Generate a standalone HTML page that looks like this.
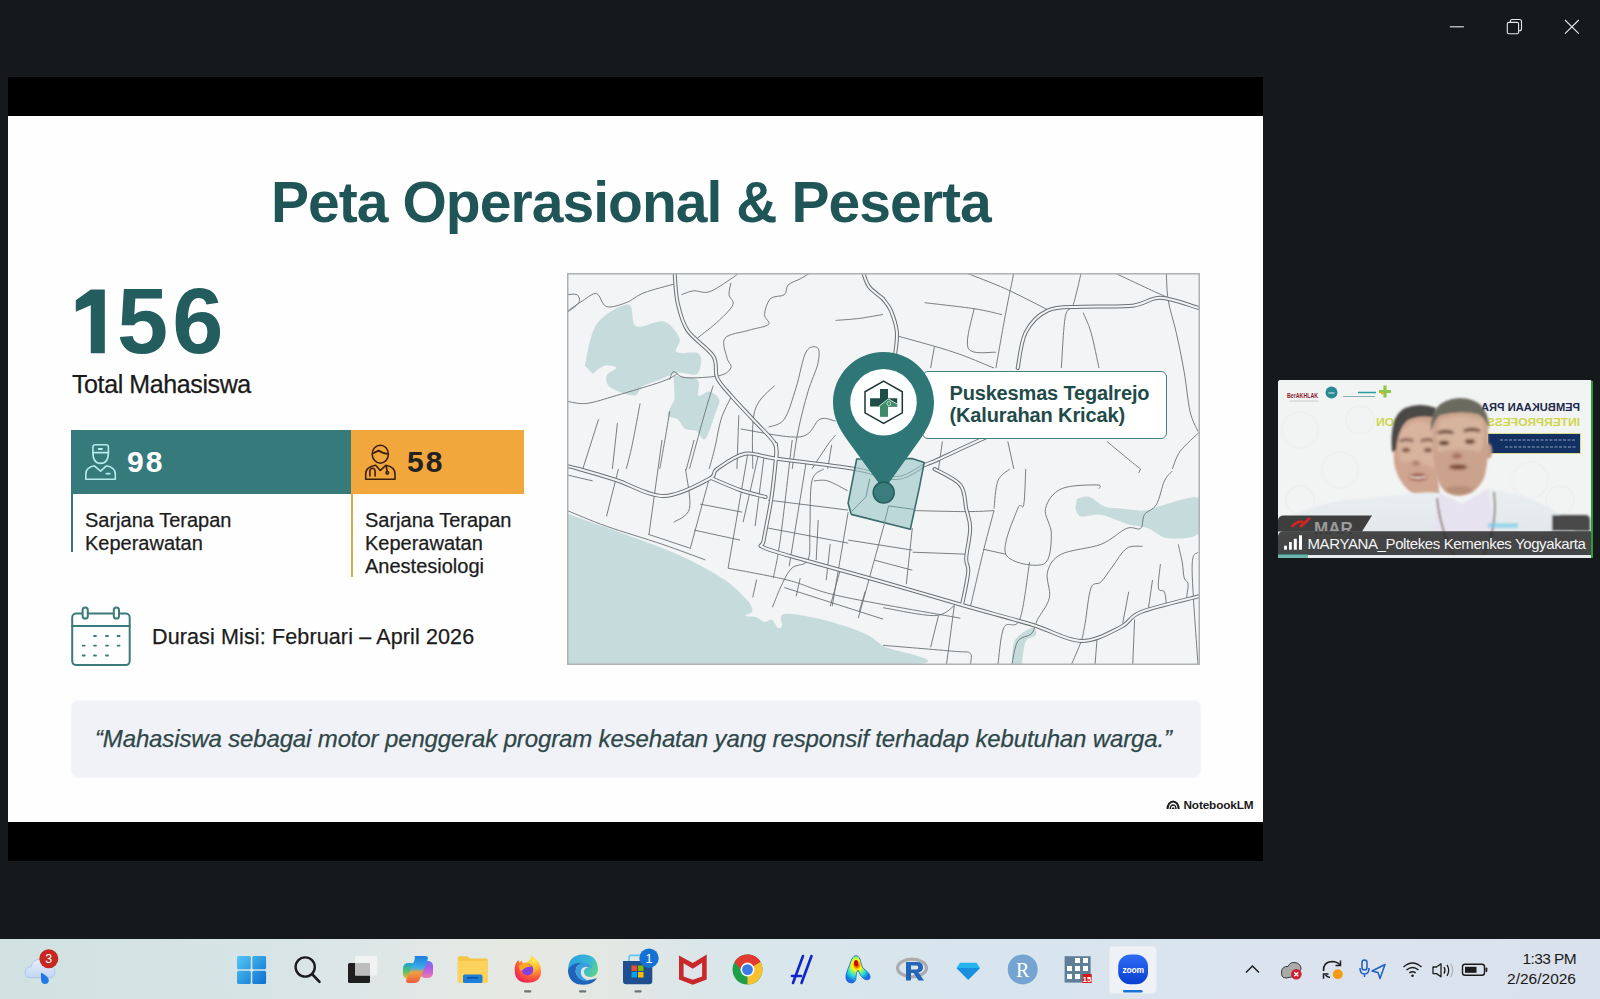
<!DOCTYPE html>
<html><head><meta charset="utf-8">
<style>
html,body{margin:0;padding:0;width:1600px;height:999px;overflow:hidden;background:#16191c;font-family:"Liberation Sans",sans-serif;}
.a{position:absolute;white-space:nowrap;}
#band1{left:8px;top:77px;width:1255px;height:39px;background:#000;}
#slide{left:8px;top:116px;width:1255px;height:706px;background:#fefefe;}
#band2{left:8px;top:822px;width:1255px;height:39px;background:#000;}
#taskbar{left:0;top:939px;width:1600px;height:60px;background:linear-gradient(90deg,#d1e1e2 0%,#d6e4e5 15%,#dfe7e6 25%,#e6e8e2 33%,#e3e7e3 38%,#d9e6ea 45%,#d8e5ee 60%,#dbe3ee 85%,#d9e1ec 100%);}
.t{position:absolute;white-space:nowrap;line-height:1;}
.sw{-webkit-text-stroke:0.25px currentColor;}
</style></head><body>
<svg class="a" style="left:1440px;top:10px" width="150" height="36" viewBox="1440 10 150 36" fill="none" stroke="#e8e8e8" stroke-width="1.1">
<path d="M1449.8 26.8 H1463.9"/>
<rect x="1507.3" y="22.4" width="11.3" height="11.3" rx="1.5"/>
<path d="M1510.3 22.4 V21.5 Q1510.3 19.5 1512.3 19.5 H1519.5 Q1521.5 19.5 1521.5 21.5 V28.7 Q1521.5 30.7 1519.5 30.7 H1518.6"/>
<path d="M1565 20 L1578.8 33.7 M1578.8 20 L1565 33.7"/>
</svg>
<div class="a" id="band1"></div>
<div class="a" id="slide"></div>
<div class="a" id="band2"></div>
<div class="a" id="taskbar"></div>

<!-- title -->
<div class="t" id="title" style="left:271px;top:173.5px;font-size:57px;font-weight:bold;color:#1f5557;letter-spacing:-0.95px;">Peta Operasional &amp; Peserta</div>
<svg class="a" style="left:70px;top:285px" width="40" height="72" viewBox="70 285 40 72"><path d="M90.8 289.5 H104.8 V353.3 H90.8 V305.2 L75.8 311.8 V300.2 Z" fill="#235d5e"/></svg>
<div class="t" id="n156" style="left:117px;top:275px;font-size:92px;letter-spacing:4px;font-weight:bold;color:#235d5e;">56</div>
<div class="t sw" id="total" style="left:72px;top:372px;font-size:25px;letter-spacing:-0.4px;color:#1a1a1a;">Total Mahasiswa</div>

<div class="a" style="left:71px;top:430px;width:281px;height:64px;background:#377a7c;"></div>
<div class="a" style="left:351px;top:430px;width:173px;height:64px;background:#f2a73d;"></div>
<div class="a" style="left:71px;top:494px;width:2px;height:58px;background:#377a7c;"></div>
<div class="a" style="left:351px;top:494px;width:2px;height:83px;background:#d9aa4c;"></div>

<div class="t" id="n98" style="left:127px;top:447.3px;font-size:30px;letter-spacing:2px;font-weight:bold;color:#fff;">98</div>
<div class="t" id="n58" style="left:407px;top:447.3px;font-size:30px;letter-spacing:2px;font-weight:bold;color:#222;">58</div>

<div class="t sw" style="left:85px;top:508.5px;font-size:20px;line-height:23.4px;color:#1c1c1c;">Sarjana Terapan<br>Keperawatan</div>
<div class="t sw" style="left:365px;top:508.5px;font-size:20px;line-height:23.1px;color:#1c1c1c;">Sarjana Terapan<br>Keperawatan<br>Anestesiologi</div>

<div class="t sw" id="durasi" style="left:152px;top:626.5px;font-size:21.5px;letter-spacing:0.13px;color:#1c1c1c;">Durasi Misi: Februari – April 2026</div>

<div class="a" style="left:72px;top:701px;width:1128px;height:76px;background:#f0f2f7;border-radius:7px;box-shadow:0 0 2px 1px #f3f5f9;"></div>
<div class="t sw" id="quote" style="left:95px;top:726.5px;font-size:24px;letter-spacing:-0.14px;font-style:italic;color:#2f4748;">“Mahasiswa sebagai motor penggerak program kesehatan yang responsif terhadap kebutuhan warga.”</div>

<div class="t" id="nblm" style="left:1183.5px;top:799.5px;font-size:11.8px;font-weight:bold;letter-spacing:-0.15px;color:#1a1a1a;">NotebookLM</div>

<!-- map -->
<svg class="a" style="left:80px;top:440px" width="40" height="44" viewBox="80 440 40 44" fill="none" stroke="#b5ecec" stroke-width="1.6" stroke-linejoin="round" stroke-linecap="round">
<path d="M92.9 452.6 V447 Q92.9 444.8 95.5 444.8 H105.9 Q108.4 444.8 108.4 447 V452.6 Z"/>
<path d="M92.9 452.6 Q92.9 463.4 100.6 463.4 Q108.4 463.4 108.4 452.6"/>
<path d="M98.6 449 H102" stroke-width="1.8"/>
<path d="M94.3 465.8 L100.6 471.2 L106.4 465.8 Q115.3 467.5 115.3 474 V479.2 H85.8 V474 Q85.8 467.5 94.3 465.8 Z"/>
<path d="M106.3 473.6 H109.8" stroke-width="1.8"/>
</svg>
<svg class="a" style="left:360px;top:440px" width="40" height="44" viewBox="360 440 40 44" fill="none" stroke="#3b2010" stroke-width="1.6" stroke-linejoin="round" stroke-linecap="round">
<ellipse cx="380.3" cy="454.2" rx="8.1" ry="9"/>
<path d="M372.6 453.6 Q375.5 452.2 378.6 450.5 Q383 453.8 388 453.8"/>
<path d="M375.6 465.3 L380.3 470.5 L385.8 465.3 Q395 467 395 474 V479.2 H365.7 V474 Q365.7 467 375.6 465.3 Z"/>
<path d="M369.9 476 V472 Q369.9 468.3 372.5 468.3 Q375.1 468.3 375.1 472 V476"/>
<path d="M386.2 466 L387.2 471.5"/>
<circle cx="387.3" cy="472.8" r="1.3"/>
</svg>
<svg class="a" style="left:68px;top:604px" width="66" height="66" viewBox="68 604 66 66" fill="none" stroke="#3b7b7b" stroke-width="2" stroke-linejoin="round" stroke-linecap="round">
<rect x="72.2" y="613.6" width="57.5" height="51.5" rx="4"/>
<path d="M72.2 626 H129.7"/>
<rect x="82.6" y="607.5" width="5.2" height="11" rx="2.6" fill="#fefefe"/>
<rect x="113.8" y="607.5" width="5.2" height="11" rx="2.6" fill="#fefefe"/>
<g stroke-width="1.8"><path d="M94 636 H96 M106 636 H108 M117.6 636 H119.6 M82.7 645.6 H84.7 M94 645.6 H96 M106 645.6 H108 M117.6 645.6 H119.6 M82.7 655.5 H84.7 M94 655.5 H96 M106 655.5 H108"/></g>
</svg>
<svg class="a" style="left:1163px;top:797px" width="20" height="14" viewBox="1163 797 20 14" fill="none" stroke="#1a1a1a">
<path d="M1167.5 809 A5.6 7.6 0 0 1 1178.7 809" stroke-width="2"/>
<path d="M1170.2 809 A2.9 4 0 0 1 1176 809" stroke-width="1.5"/>
<path d="M1172.4 809 A0.7 1 0 0 1 1173.8 809" stroke-width="1.4"/>
</svg>
<svg class="a" style="left:567px;top:273px" width="633" height="392" viewBox="567 273 633 392">
<rect x="567" y="273" width="633" height="392" fill="#f2f4f6"/>
<path d="M567 513.4 C572.9 515.5 589.4 521.5 602.6 526.3 C615.8 531.1 632.2 536.7 646.0 542.0 C659.8 547.3 672.3 551.6 685.5 557.9 C698.7 564.2 715.1 573.3 725.0 580.0 C734.9 586.7 740.7 593.8 745.0 598.0 C749.3 602.2 749.5 602.7 750.7 605.0 C751.9 607.3 753.0 610.2 752.0 612.0 C751.0 613.8 744.3 615.2 745.0 616.0 C745.7 616.8 752.8 616.0 756.0 617.0 C759.2 618.0 761.8 621.5 764.5 622.0 C767.2 622.5 769.8 619.0 772.0 620.0 C774.2 621.0 776.3 627.0 778.0 628.0 C779.7 629.0 781.0 628.3 782.0 626.0 C783.0 623.7 777.3 615.0 784.3 614.0 C791.3 613.0 810.6 616.8 823.8 620.0 C837.0 623.2 853.4 628.7 863.3 633.0 C873.2 637.3 875.4 640.7 883.0 646.0 C890.6 651.3 961.5 661.8 908.8 665.0 C856.1 668.2 624.0 665.0 567.0 665.0 Z" fill="#c6dbdc"/>
<path d="M584.8 365.8 C586.8 358.9 589.4 334.6 596.6 324.4 C603.8 314.2 621.6 304.3 628.2 304.6 C634.8 304.9 630.2 323.5 636.1 326.3 C642.0 329.1 656.5 319.4 663.8 321.4 C671.0 323.4 677.5 333.1 679.6 338.2 C681.7 343.3 673.3 349.4 676.6 352.0 C679.9 354.6 695.8 350.4 699.3 354.0 C702.8 357.6 701.0 370.6 697.4 373.7 C693.8 376.8 683.9 371.7 677.6 372.7 C671.3 373.7 665.7 377.4 659.8 379.7 C653.9 382.0 646.4 384.0 642.1 386.6 C637.8 389.2 639.5 395.3 634.2 395.5 C628.9 395.7 615.1 390.9 610.5 387.6 C605.9 384.3 605.5 379.0 606.5 375.7 C607.5 372.4 616.7 369.4 616.4 367.8 C616.1 366.2 608.5 364.8 604.5 365.8 C600.5 366.8 594.7 372.4 592.7 373.7 Z" fill="#c6dbdc"/>
<path d="M673.7 375.7 C677.7 376.4 693.3 376.4 697.4 379.7 C701.5 383.0 696.3 393.5 698.3 395.5 C700.3 397.5 705.7 390.9 709.2 391.5 C712.7 392.1 718.0 396.1 719.1 399.4 C720.2 402.7 718.4 404.7 716.1 411.3 C713.8 417.9 708.6 435.6 705.3 438.9 C702.0 442.2 699.7 432.6 696.4 431.0 C693.1 429.4 688.6 431.0 685.5 429.0 C682.4 427.0 680.6 421.5 677.6 419.2 C674.6 416.9 668.2 418.5 667.7 415.2 C667.2 411.9 673.5 402.0 674.6 399.4 Z" fill="#c6dbdc"/>
<path d="M1077.2 498.7 C1079.2 498.4 1084.5 495.4 1089.1 496.7 C1093.7 498.0 1099.6 504.6 1104.9 506.6 C1110.2 508.6 1114.2 507.9 1120.8 508.6 C1127.4 509.3 1137.2 511.2 1144.5 510.6 C1151.8 510.0 1155.2 506.7 1164.4 504.7 C1173.7 502.7 1194.1 494.1 1200.0 498.7 C1205.9 503.3 1205.3 525.8 1200.0 532.4 C1194.7 539.0 1176.9 539.0 1168.3 538.3 C1159.7 537.6 1155.1 530.7 1148.5 528.4 C1141.9 526.1 1134.7 526.1 1128.7 524.5 C1122.8 522.9 1117.8 520.1 1112.8 518.5 C1107.8 516.9 1104.3 514.9 1099.0 514.6 C1093.7 514.3 1085.1 517.6 1081.1 516.6 C1077.1 515.6 1076.2 509.9 1075.2 508.6 Z" fill="#c6dbdc"/>
<path d="M1011.8 665.0 C1012.1 661.4 1012.1 648.6 1013.8 643.4 C1015.4 638.1 1018.4 636.1 1021.7 633.5 C1025.0 630.9 1031.3 627.2 1033.6 627.5 C1035.9 627.8 1036.9 633.1 1035.6 635.4 C1034.3 637.7 1028.0 636.5 1025.7 641.4 C1023.4 646.3 1022.4 661.1 1021.7 665.0 Z" fill="#c6dbdc"/>
<g fill="none" stroke="#6b7174" stroke-width="0.9" stroke-linejoin="round">
<path d="M567.0 294.7 C568.6 294.7 574.9 293.4 576.9 294.7 C578.9 296.0 580.5 299.6 578.9 302.6 C577.2 305.6 569.0 310.9 567.0 312.5"/>
<path d="M567.0 311.5 C569.6 309.7 577.9 303.7 582.8 300.7 C587.7 297.7 592.6 292.7 596.6 293.7 C600.6 294.7 601.5 305.1 606.5 306.6 C611.5 308.1 620.0 304.9 626.3 302.6 C632.5 300.3 636.0 295.9 644.0 292.8 C652.0 289.7 669.5 285.4 674.6 283.9"/>
<path d="M681.6 294.7 C683.6 294.1 688.8 291.3 693.4 290.8 C698.0 290.3 703.0 293.8 709.2 291.8 C715.5 289.8 726.0 282.0 730.9 278.9 C735.8 275.8 737.5 274.0 738.8 273.0"/>
<path d="M697.4 338.2 C701.0 335.2 713.2 326.0 719.1 320.4 C725.0 314.8 731.2 308.9 732.9 304.6 C734.5 300.3 729.3 298.3 729.0 294.7 C728.7 291.1 730.6 284.9 730.9 282.9"/>
<path d="M809.9 273.0 C808.3 274.0 803.7 276.9 800.1 278.9 C796.5 280.9 790.8 282.3 788.2 284.9 C785.6 287.5 787.3 292.4 784.3 294.7 C781.3 297.0 773.7 295.4 770.4 298.7 C767.1 302.0 764.8 310.2 764.5 314.5 C764.2 318.8 771.1 321.8 768.5 324.4 C765.9 327.0 756.0 328.0 748.7 330.3 C741.5 332.6 728.6 333.6 725.0 338.2 C721.4 342.8 726.0 353.0 727.0 357.9 C728.0 362.8 732.2 364.8 730.9 367.8 C729.6 370.8 726.7 374.1 719.1 375.7 C711.5 377.3 693.1 378.3 685.5 377.7 C677.9 377.1 676.3 371.5 673.7 371.8 C671.1 372.1 670.4 378.4 669.7 379.7"/>
<path d="M567.0 401.4 C570.3 401.7 578.6 404.4 586.8 403.4 C595.0 402.4 603.9 399.1 616.4 395.5 C628.9 391.9 651.6 385.2 661.8 381.6 C672.0 378.0 675.0 375.0 677.6 373.7"/>
<path d="M582.8 468.9 L598.6 419.2"/>
<path d="M612.4 468.9 L617.4 423.1"/>
<path d="M626.3 468.9 C627.3 464.9 629.9 455.7 632.2 444.8 C634.5 433.9 638.8 410.3 640.1 403.4"/>
<path d="M659.8 468.9 C660.8 463.2 664.1 444.6 665.8 435.0 C667.4 425.4 669.1 415.2 669.7 411.3"/>
<path d="M689.5 468.9 C692.1 459.3 701.3 425.2 705.3 411.3 C709.2 397.4 711.9 389.9 713.2 385.6"/>
<path d="M709.2 468.9 C710.2 465.2 713.1 455.1 715.1 446.8 C717.1 438.5 718.5 427.4 721.1 419.2 C723.7 411.0 729.3 401.0 730.9 397.4"/>
<path d="M736.9 468.9 L738.8 415.2"/>
<path d="M752.7 468.9 C753.0 459.3 751.0 425.2 754.6 411.3 C758.2 397.4 771.1 389.9 774.4 385.6"/>
<path d="M768.5 427.1 C771.1 425.8 779.7 425.8 784.3 419.2 C788.9 412.6 792.5 398.8 796.1 387.6 C799.7 376.4 802.4 358.6 806.0 352.0 C809.6 345.4 815.8 346.1 817.8 348.1 C819.8 350.1 819.4 356.7 817.8 363.9 C816.2 371.1 811.3 380.3 808.0 391.5 C804.7 402.7 800.7 418.1 798.1 431.0 C795.5 443.9 793.2 462.6 792.2 468.9"/>
<path d="M740.8 429.0 C750.7 430.3 786.9 438.5 800.1 436.9 C813.3 435.3 813.9 421.8 819.8 419.2 C825.7 416.6 833.0 420.8 835.6 421.1"/>
<path d="M811.9 468.9 C814.5 464.9 823.8 450.4 827.7 444.8 C831.7 439.2 834.3 436.6 835.6 435.0"/>
<path d="M835.6 320.4 C839.5 320.1 851.4 319.4 859.3 318.4 C867.2 317.4 879.0 315.1 883.0 314.5"/>
<path d="M827.7 468.9 L831.7 444.8"/>
<path d="M966.2 273.0 C972.8 275.6 992.2 282.8 1005.8 288.9 C1019.3 295.0 1040.5 306.2 1047.5 309.7"/>
<path d="M1013.8 273.0 C1012.5 279.6 1008.8 296.8 1005.8 312.6 C1002.8 328.5 997.5 358.9 995.9 368.1"/>
<path d="M924.6 302.7 C932.9 303.7 961.2 306.7 974.1 308.7 C987.0 310.7 997.3 313.6 1001.9 314.6"/>
<path d="M974.1 308.7 C973.1 315.3 964.6 341.0 968.2 348.3 C971.8 355.6 991.3 351.6 995.9 352.3"/>
<path d="M898.9 336.4 C904.8 338.0 923.9 343.2 934.5 346.3 C945.1 349.4 952.4 351.6 962.3 355.2 C972.2 358.8 988.7 366.0 994.0 368.1"/>
<path d="M934.5 346.3 L930.6 368.1"/>
<path d="M1081.1 273.0 C1079.8 278.3 1075.8 297.4 1073.2 304.7 C1070.6 312.0 1067.3 306.0 1065.3 316.6 C1063.3 327.2 1062.0 359.5 1061.3 368.1"/>
<path d="M1083.1 312.6 C1084.4 315.9 1088.3 323.1 1091.0 332.4 C1093.7 341.6 1097.7 362.2 1099.0 368.1"/>
<path d="M1114.8 273.0 C1120.4 275.6 1139.9 284.9 1148.5 288.9 C1157.1 292.9 1163.3 295.5 1166.3 296.8"/>
<path d="M1166.3 273.0 C1166.6 277.6 1166.6 290.8 1168.3 300.7 C1170.0 310.6 1173.5 320.5 1176.2 332.4 C1178.9 344.3 1181.9 358.9 1184.2 372.1 C1186.5 385.3 1187.8 401.8 1190.1 411.7 C1192.4 421.6 1196.7 428.2 1198.0 431.5"/>
<path d="M1106.9 441.4 C1110.9 444.7 1125.1 456.6 1130.7 461.2 C1136.3 465.8 1138.9 467.7 1140.6 469.0"/>
<path d="M1200.0 431.5 C1196.7 434.8 1184.8 445.1 1180.2 451.3 C1175.6 457.6 1173.6 466.1 1172.3 469.0"/>
<path d="M1007.8 441.4 L1013.8 469.0"/>
<path d="M942.4 441.4 L938.5 469.0"/>
<path d="M983.1 549.2 L1005.8 554.2"/>
<path d="M618.4 469.0 L606.5 516.4"/>
<path d="M673.7 522.3 C676.3 520.0 687.5 517.4 689.5 508.5 C691.5 499.6 686.2 475.6 685.5 469.0"/>
<path d="M823.8 469.0 C821.8 471.0 814.2 471.0 811.9 480.9 C809.6 490.8 810.5 515.1 809.9 528.3 C809.2 541.5 811.0 553.3 808.0 559.9 C805.0 566.5 796.5 563.8 792.2 567.8 C787.9 571.8 785.6 577.0 782.3 583.6 C779.0 590.2 774.0 603.3 772.4 607.3"/>
<path d="M813.9 480.9 C816.2 480.9 822.1 479.3 827.7 480.9 C833.3 482.5 844.2 489.1 847.5 490.7"/>
<path d="M784.3 587.5 L883.0 619.1"/>
<path d="M756.6 579.6 L752.7 597.4"/>
<path d="M865.2 591.5 L859.3 611.2"/>
<path d="M567.0 510.5 C573.6 513.1 590.7 520.7 606.5 526.3 C622.3 531.9 645.3 538.5 661.8 544.1 C678.3 549.7 698.0 557.3 705.3 559.9"/>
<path d="M648.0 534.2 L689.5 548.0"/>
<path d="M592.7 480.9 L567.0 474.9"/>
<path d="M914.7 510.6 C923.3 510.8 953.0 511.6 966.2 511.6 C979.4 511.6 989.4 510.8 994.0 510.6"/>
<path d="M912.7 552.2 L966.2 554.2"/>
<path d="M994.0 510.6 C992.4 516.9 988.1 532.1 984.1 548.3 C980.1 564.5 972.5 597.8 970.2 607.7"/>
<path d="M1009.8 469.0 C1007.8 471.0 1000.5 474.3 997.9 480.9 C995.3 487.5 994.6 504.0 994.0 508.6"/>
<path d="M1025.7 469.0 C1025.4 474.9 1025.0 498.1 1023.7 504.7 C1022.4 511.3 1020.7 500.4 1017.7 508.6 C1014.7 516.9 1001.5 545.0 1005.8 554.2 C1010.1 563.5 1035.9 567.4 1043.5 564.1 C1051.1 560.8 1051.1 543.6 1051.4 534.4 C1051.7 525.1 1043.8 516.2 1045.5 508.6 C1047.2 501.0 1052.7 492.8 1061.3 488.8 C1069.9 484.9 1090.7 484.9 1097.0 484.9 C1103.3 484.9 1098.7 488.1 1099.0 488.8"/>
<path d="M1029.6 562.1 C1027.9 571.7 1024.0 608.7 1019.7 619.6 C1015.4 630.5 1007.5 619.9 1003.9 627.5 C1000.3 635.1 998.9 658.8 997.9 665.0"/>
<path d="M1172.3 471.0 C1171.0 472.6 1167.1 475.3 1164.4 480.9 C1161.8 486.5 1159.7 499.1 1156.4 504.7 C1153.1 510.3 1147.1 510.7 1144.5 514.6 C1141.9 518.6 1143.6 526.1 1140.6 528.4 C1137.6 530.7 1133.3 525.8 1126.7 528.4 C1120.1 531.0 1111.9 540.0 1101.0 544.3 C1090.1 548.6 1070.2 549.6 1061.3 554.2 C1052.4 558.8 1049.5 564.7 1047.5 572.0 C1045.5 579.3 1051.1 589.9 1049.4 597.8 C1047.7 605.7 1040.5 613.6 1037.5 619.6 C1034.5 625.6 1034.9 629.9 1031.6 633.5 C1028.3 637.1 1021.0 636.1 1017.7 641.4 C1014.4 646.6 1012.8 661.1 1011.8 665.0"/>
<path d="M1142.6 546.3 C1139.9 546.6 1131.7 545.0 1126.7 548.3 C1121.7 551.6 1117.1 560.5 1112.8 566.1 C1108.5 571.7 1104.6 578.3 1101.0 581.9 C1097.4 585.5 1093.7 581.0 1091.0 587.9 C1088.3 594.8 1086.8 614.6 1085.1 623.5 C1083.4 632.4 1083.4 634.5 1081.1 641.4 C1078.8 648.3 1072.8 661.1 1071.2 665.0"/>
<path d="M1178.2 544.3 C1178.9 547.3 1181.2 556.5 1182.2 562.1 C1183.2 567.7 1183.2 574.4 1184.2 578.0 C1185.2 581.6 1187.8 580.3 1188.1 583.9 C1188.4 587.5 1186.5 597.1 1186.2 599.8"/>
<path d="M1160.4 564.1 C1160.1 568.1 1157.7 583.3 1158.4 587.9 C1159.1 592.5 1163.1 589.2 1164.4 591.8 C1165.7 594.4 1166.0 601.7 1166.3 603.7"/>
<path d="M1152.5 580.0 L1148.5 607.7"/>
<path d="M1128.7 591.8 L1122.7 623.5"/>
<path d="M1134.6 619.6 L1132.7 665.0"/>
<path d="M1097.0 639.4 L1095.0 665.0"/>
<path d="M883.0 607.7 C891.6 609.0 922.6 615.9 934.5 615.6 C946.4 615.3 951.0 607.4 954.3 605.7"/>
<path d="M938.5 615.6 L930.6 647.3"/>
<path d="M954.3 605.7 L946.4 665.0"/>
<path d="M883.0 645.3 C894.9 646.3 939.8 650.0 954.3 651.3 C968.8 652.6 967.6 651.0 970.2 653.3 C972.9 655.6 970.2 663.0 970.2 665.0"/>
<path d="M1198.0 552.2 C1197.0 554.9 1192.1 549.3 1192.1 568.1 C1192.1 586.9 1197.0 648.9 1198.0 665.0"/>
<path d="M1140.6 469.0 L1138.6 473.0"/>
<path d="M662.0 440.0 L649.0 534.1"/>
<path d="M694.1 440.0 L686.1 470.0"/>
<path d="M709.1 479.0 L690.1 549.1"/>
<path d="M700.1 504.1 L742.1 512.1"/>
<path d="M694.1 530.1 L740.1 540.1"/>
<path d="M748.1 452.0 L728.1 568.2"/>
<path d="M758.1 456.0 L743.1 522.1"/>
<path d="M764.1 456.0 L755.1 526.1"/>
<path d="M792.2 440.0 C790.2 456.7 783.4 517.1 780.2 540.1 C777.0 563.1 774.4 571.9 773.2 578.2"/>
<path d="M806.2 462.0 L789.2 566.2"/>
<path d="M768.2 500.1 L848.2 510.1"/>
<path d="M768.2 528.1 L848.2 543.1"/>
<path d="M848.2 540.1 L912.3 550.1"/>
<path d="M874.3 560.1 L912.3 570.2"/>
<path d="M848.2 512.1 L832.2 606.2"/>
<path d="M884.3 524.1 L858.3 618.2"/>
<path d="M912.3 528.1 L906.3 584.2"/>
<path d="M818.2 520.1 L816.2 560.1"/>
<path d="M830.2 544.1 L826.2 580.2"/>
<path d="M728.1 568.2 C738.1 570.2 769.5 575.5 788.2 580.2 C806.9 584.9 811.5 589.9 840.2 596.2 C868.9 602.5 940.4 614.5 960.4 618.2"/>
<path d="M800.2 578.2 L796.2 596.2"/>
<path d="M840.2 570.2 L830.2 606.2"/>
</g>
<g fill="none" stroke="#6b7174" stroke-width="4" stroke-linejoin="round" stroke-linecap="round">
<path d="M674.6 273.0 C675.1 277.9 675.5 293.1 677.6 302.6 C679.8 312.2 681.6 321.4 687.5 330.3 C693.4 339.2 708.3 348.1 713.2 356.0 C718.1 363.9 714.2 371.1 717.1 377.7 C720.0 384.3 725.0 388.6 730.9 395.5 C736.8 402.4 745.5 411.3 752.7 419.2 C760.0 427.1 770.5 436.5 774.4 442.9 C778.3 449.3 776.1 455.2 776.4 457.7"/>
<path d="M567 466 C569.0 466.5 570.8 466.7 579.0 469.0 C587.2 471.3 601.8 475.5 616.0 480.0 C630.2 484.5 648.5 496.2 664.0 496.0 C679.5 495.8 700.2 483.5 709.0 479.0 C717.8 474.5 711.0 473.2 717.0 469.0 C723.0 464.8 735.3 455.6 745.0 453.8 C754.7 452.0 756.9 455.9 775.0 458.4 C793.1 460.9 833.5 465.5 853.8 468.8 C874.1 472.1 885.0 478.7 896.9 478.1 C908.8 477.5 918.4 468.0 925.0 465.0 C931.6 462.0 930.0 463.1 936.3 460.3 C942.5 457.5 951.9 452.9 962.5 448.0 C973.1 443.1 993.8 433.8 1000.0 431.0"/>
<path d="M776 444 C776.0 446.2 776.8 448.4 776.0 457.5 C775.2 466.6 773.3 485.1 771.3 498.8 C769.3 512.5 765.0 531.9 763.8 540.0 C762.5 548.1 757.1 544.2 763.8 547.5 C770.5 550.8 784.1 554.2 804.0 560.0 C823.9 565.8 856.7 574.5 883.0 582.0 C909.3 589.5 937.0 597.8 962.0 605.0 C987.0 612.2 1013.2 619.0 1033.0 625.0 C1052.8 631.0 1066.3 640.7 1081.0 641.0 C1095.7 641.3 1111.0 631.8 1121.0 627.0 C1131.0 622.2 1127.8 617.2 1141.0 612.0 C1154.2 606.8 1190.2 598.7 1200.0 596.0"/>
<path d="M711 478 C715.8 480.0 730.9 486.8 740.0 490.0 C749.1 493.2 761.3 495.8 765.6 497.0"/>
<path d="M863.3 273.0 C864.3 275.3 865.9 282.5 869.2 286.8 C872.5 291.1 880.7 296.7 883.0 298.7"/>
<path d="M883.0 298.8 C884.3 300.8 888.6 305.0 890.9 310.6 C893.2 316.2 896.2 324.8 896.9 332.4 C897.6 340.0 895.2 352.2 894.9 356.2"/>
<path d="M1017.7 368.1 C1019.0 362.2 1020.7 342.0 1025.7 332.4 C1030.7 322.8 1038.3 314.9 1047.5 310.6 C1056.7 306.3 1066.9 307.5 1081.1 306.7 C1095.3 305.9 1119.5 307.2 1132.7 305.7 C1145.9 304.2 1149.5 297.5 1160.4 297.8 C1171.3 298.1 1191.7 306.1 1198.0 307.7"/>
<path d="M934.5 469.0 C938.8 471.6 955.0 478.3 960.3 484.9 C965.6 491.5 964.6 501.4 966.2 508.6 C967.9 515.9 970.2 520.1 970.2 528.4 C970.2 536.7 966.5 550.9 966.2 558.2 C965.9 565.5 968.9 564.4 968.2 572.0 C967.6 579.6 963.3 598.4 962.3 603.7"/>
</g>
<g fill="none" stroke="#f2f4f6" stroke-width="2" stroke-linejoin="round" stroke-linecap="round">
<path d="M674.6 273.0 C675.1 277.9 675.5 293.1 677.6 302.6 C679.8 312.2 681.6 321.4 687.5 330.3 C693.4 339.2 708.3 348.1 713.2 356.0 C718.1 363.9 714.2 371.1 717.1 377.7 C720.0 384.3 725.0 388.6 730.9 395.5 C736.8 402.4 745.5 411.3 752.7 419.2 C760.0 427.1 770.5 436.5 774.4 442.9 C778.3 449.3 776.1 455.2 776.4 457.7"/>
<path d="M567 466 C569.0 466.5 570.8 466.7 579.0 469.0 C587.2 471.3 601.8 475.5 616.0 480.0 C630.2 484.5 648.5 496.2 664.0 496.0 C679.5 495.8 700.2 483.5 709.0 479.0 C717.8 474.5 711.0 473.2 717.0 469.0 C723.0 464.8 735.3 455.6 745.0 453.8 C754.7 452.0 756.9 455.9 775.0 458.4 C793.1 460.9 833.5 465.5 853.8 468.8 C874.1 472.1 885.0 478.7 896.9 478.1 C908.8 477.5 918.4 468.0 925.0 465.0 C931.6 462.0 930.0 463.1 936.3 460.3 C942.5 457.5 951.9 452.9 962.5 448.0 C973.1 443.1 993.8 433.8 1000.0 431.0"/>
<path d="M776 444 C776.0 446.2 776.8 448.4 776.0 457.5 C775.2 466.6 773.3 485.1 771.3 498.8 C769.3 512.5 765.0 531.9 763.8 540.0 C762.5 548.1 757.1 544.2 763.8 547.5 C770.5 550.8 784.1 554.2 804.0 560.0 C823.9 565.8 856.7 574.5 883.0 582.0 C909.3 589.5 937.0 597.8 962.0 605.0 C987.0 612.2 1013.2 619.0 1033.0 625.0 C1052.8 631.0 1066.3 640.7 1081.0 641.0 C1095.7 641.3 1111.0 631.8 1121.0 627.0 C1131.0 622.2 1127.8 617.2 1141.0 612.0 C1154.2 606.8 1190.2 598.7 1200.0 596.0"/>
<path d="M711 478 C715.8 480.0 730.9 486.8 740.0 490.0 C749.1 493.2 761.3 495.8 765.6 497.0"/>
<path d="M863.3 273.0 C864.3 275.3 865.9 282.5 869.2 286.8 C872.5 291.1 880.7 296.7 883.0 298.7"/>
<path d="M883.0 298.8 C884.3 300.8 888.6 305.0 890.9 310.6 C893.2 316.2 896.2 324.8 896.9 332.4 C897.6 340.0 895.2 352.2 894.9 356.2"/>
<path d="M1017.7 368.1 C1019.0 362.2 1020.7 342.0 1025.7 332.4 C1030.7 322.8 1038.3 314.9 1047.5 310.6 C1056.7 306.3 1066.9 307.5 1081.1 306.7 C1095.3 305.9 1119.5 307.2 1132.7 305.7 C1145.9 304.2 1149.5 297.5 1160.4 297.8 C1171.3 298.1 1191.7 306.1 1198.0 307.7"/>
<path d="M934.5 469.0 C938.8 471.6 955.0 478.3 960.3 484.9 C965.6 491.5 964.6 501.4 966.2 508.6 C967.9 515.9 970.2 520.1 970.2 528.4 C970.2 536.7 966.5 550.9 966.2 558.2 C965.9 565.5 968.9 564.4 968.2 572.0 C967.6 579.6 963.3 598.4 962.3 603.7"/>
</g>
<path d="M856.7 459 L912 458.6 L924.2 462.6 L919.3 487.8 L910.3 529.3 L851.3 514.4 L848.1 503.2 Z" fill="#9cc6c6" fill-opacity="0.62" stroke="#3a6d6d" stroke-width="1.6" stroke-linejoin="round"/>
<path d="M869.7 478.8 L866 496.8 L851.7 511.3 M888.6 505.9 L884.1 523.9 M888.6 505.9 L914.8 509.5" fill="none" stroke="#6a8e8e" stroke-width="0.9"/>
</svg>
<div class="a" style="left:567px;top:273px;width:633px;height:392px;box-shadow:inset 0 0 0 1.5px #adb1b3;"></div>
<div class="a" style="left:922px;top:371px;width:245px;height:67.5px;background:#fff;border:1.7px solid #447f7f;border-radius:6px;box-sizing:border-box;"></div>
<svg class="a" style="left:567px;top:273px" width="633" height="392" viewBox="567 273 633 392"><!--PINSTART-->
<path d="M883.5 352 C911.5 352 934 374.5 934 402.5 C934 418 927 430 919 441 L883.8 490 L848 441 C840 430 833 418 833 402.5 C833 374.5 855.5 352 883.5 352 Z" fill="#2f7676"/>
<circle cx="883.7" cy="492.5" r="10.5" fill="#3b7d7c" stroke="#245c5c" stroke-width="1.5"/>
<circle cx="883.5" cy="402.3" r="33.3" fill="#fdfefe"/>
<path d="M883.6 381.2 L902.3 391.8 L902.3 412.8 L883.6 423.4 L865 412.8 L865 391.8 Z" fill="none" stroke="#1f3535" stroke-width="1.5"/>
<clipPath id="crossclip"><path d="M880 389 H888 V398.2 H897.2 V406.6 H888 V416.4 H880 V406.6 H870.1 V398.2 H880 Z"/></clipPath>
<path d="M880 389 H888 V398.2 H897.2 V406.6 H888 V416.4 H880 V406.6 H870.1 V398.2 H880 Z" fill="#1f4d47"/>
<path d="M877 418 V407 L888.4 398.8 L898 404.5 V418 Z" fill="#3e8a6b" clip-path="url(#crossclip)"/>
<path d="M878.6 406.6 L888.4 398.9 L897.4 404.2" fill="none" stroke="#d5f2e8" stroke-width="0.9"/>
<circle cx="888.8" cy="403.6" r="1.9" fill="none" stroke="#d5f2e8" stroke-width="0.8"/>
</svg>
<div class="t" id="lab1" style="left:949.5px;top:382.8px;font-size:20px;letter-spacing:-0.17px;font-weight:bold;color:#1f4b49;">Puskesmas Tegalrejo</div>
<div class="t" id="lab2" style="left:949.5px;top:405px;font-size:20px;letter-spacing:-0.13px;font-weight:bold;color:#1f4b49;">(Kalurahan Kricak)</div>

<div class="a" style="left:1278px;top:380px;width:314px;height:178px;background:#f2f3f3;border-radius:3px 3px 0 0;overflow:hidden;">
<svg width="314" height="178" viewBox="1278 380 314 178" style="position:absolute;left:0;top:0;">
<defs>
<radialGradient id="face1" cx="0.5" cy="0.45" r="0.6"><stop offset="0" stop-color="#e0bba6"/><stop offset="0.7" stop-color="#c99c86"/><stop offset="1" stop-color="#a9826f"/></radialGradient>
<radialGradient id="face2" cx="0.5" cy="0.5" r="0.6"><stop offset="0" stop-color="#ddb8a2"/><stop offset="0.75" stop-color="#c89e88"/><stop offset="1" stop-color="#a88370"/></radialGradient>
<linearGradient id="shirt" x1="0" y1="0" x2="0" y2="1"><stop offset="0" stop-color="#e9eef0"/><stop offset="1" stop-color="#dfe4ea"/></linearGradient>
</defs>
<rect x="1278" y="380" width="314" height="178" fill="#f2f3f3"/>
<g opacity="0.12" fill="none" stroke="#d8dcde" stroke-width="2">
<circle cx="1300" cy="430" r="18"/><circle cx="1340" cy="470" r="18"/><circle cx="1300" cy="500" r="14"/><circle cx="1360" cy="420" r="14"/><circle cx="1530" cy="480" r="18"/><circle cx="1560" cy="500" r="14"/><circle cx="1510" cy="520" r="16"/>
</g>
<!-- logos -->
<text x="1287" y="398" font-family="Liberation Sans" font-weight="bold" font-size="8" fill="#8a1a2a" textLength="31" lengthAdjust="spacingAndGlyphs">BerAKHLAK</text>
<path d="M1290 401 H1318" stroke="#a0a0a0" stroke-width="0.5"/>
<circle cx="1331.5" cy="392.5" r="6" fill="#2a8a94"/><path d="M1328.5 393 H1334.5" stroke="#e0f0f0" stroke-width="1.2"/>
<path d="M1343 396.5 H1375" stroke="#6a9aaa" stroke-width="0.8"/>
<path d="M1358 392.5 H1376" stroke="#2a9a9a" stroke-width="1.5"/>
<path d="M1379 391.5 H1391 M1385 385.5 V397.5" stroke="#8cc84a" stroke-width="3.2"/>
<circle cx="1382.5" cy="393" r="1.6" fill="#e0b030"/>
<!-- banner text -->
<text transform="matrix(-1 0 0 1 3061 0)" x="1481" y="410.5" font-family="Liberation Sans" font-weight="bold" font-size="11.5" fill="#1d2a4a" textLength="99" lengthAdjust="spacingAndGlyphs">PEMBUKAAN PRA</text>
<text transform="matrix(-1 0 0 1 2956 0)" x="1376" y="426" font-family="Liberation Sans" font-weight="bold" font-size="11.5" fill="#cdd64e" textLength="204" lengthAdjust="spacingAndGlyphs">INTERPROFESSIONAL EDUCATION</text>
<rect x="1487.5" y="433.5" width="93" height="20" fill="#123062" stroke="#d8dc8a" stroke-width="1"/>
<path d="M1500 440 H1576 M1505 447 H1576" stroke="#8fa0c0" stroke-width="1.2" stroke-dasharray="3 1.5"/>
<!-- man behind -->
<filter id="soft" x="-20%" y="-20%" width="140%" height="140%"><feGaussianBlur stdDeviation="0.8"/></filter>
<filter id="soft2" x="-50%" y="-50%" width="200%" height="200%"><feGaussianBlur stdDeviation="1.3"/></filter>
<g filter="url(#soft)">
<path d="M1393 445 Q1392 418 1404 411 Q1418 404 1432 410 L1440 500 Q1420 500 1408 490 Q1396 478 1394 462 Z" fill="#cfa58f"/>
<path d="M1398 440 Q1405 422 1420 421 Q1432 422 1436 432 L1438 470 Q1420 460 1400 462 Z" fill="#dbb7a2" opacity="0.8" filter="url(#soft2)"/>
<path d="M1392 452 Q1389 416 1405 408 Q1420 402 1436 408 L1436 418 Q1420 414 1408 420 Q1398 428 1396 450 Z" fill="#4b4946"/>
<g filter="url(#soft2)">
<path d="M1400 441 Q1407 438 1413 441" stroke="#5a3a30" stroke-width="2.2" fill="none"/>
<path d="M1421 441 Q1428 438 1434 441" stroke="#5a3a30" stroke-width="2.2" fill="none"/>
<ellipse cx="1406" cy="450" rx="4" ry="1.8" fill="#6a4538"/>
<ellipse cx="1428" cy="450" rx="4" ry="1.8" fill="#6a4538"/>
<ellipse cx="1416" cy="463" rx="4" ry="2.5" fill="#b0806c"/>
<ellipse cx="1418" cy="477" rx="9" ry="3.5" fill="#9a5a4c"/>
</g>
<path d="M1410 476.5 Q1418 479 1426 476.5" stroke="#efe0d8" stroke-width="1.8" fill="none"/>
</g>
<!-- man front -->
<g filter="url(#soft)">
<ellipse cx="1489" cy="451" rx="3.2" ry="7.5" fill="#c49a85"/>
<path d="M1433 432 Q1432 401 1459 399 Q1487 399 1488 432 Q1489 462 1484 478 Q1476 495 1459 496 Q1442 495 1437 478 Q1432 460 1433 432 Z" fill="#cba38c"/>
<path d="M1440 420 Q1458 412 1482 420 Q1486 440 1480 452 Q1458 446 1438 452 Q1434 436 1440 420 Z" fill="#dab8a2" opacity="0.85" filter="url(#soft2)"/>
<path d="M1431 432 Q1429 400 1459 398 Q1489 398 1489 430 Q1486 418 1478 414 Q1459 410 1440 415 Q1434 420 1431 432 Z" fill="#6b6a5e"/>
<g filter="url(#soft2)">
<path d="M1438 433 Q1446 430 1453 433" stroke="#4a3024" stroke-width="2.4" fill="none"/>
<path d="M1464 431 Q1472 428 1480 431" stroke="#4a3024" stroke-width="2.4" fill="none"/>
<ellipse cx="1444" cy="443" rx="5" ry="2" fill="#5a3a2c"/>
<ellipse cx="1470" cy="441.5" rx="5" ry="2" fill="#5a3a2c"/>
<ellipse cx="1457" cy="456" rx="5" ry="3" fill="#a87560"/>
<ellipse cx="1458" cy="467" rx="9" ry="2.6" fill="#7a4a3a"/>
<ellipse cx="1459" cy="490" rx="14" ry="4" fill="#a88069" opacity="0.6"/>
</g>
</g>
<!-- shirts -->
<g filter="url(#soft)">
<path d="M1278 558 V525 Q1300 508 1345 500 L1404 495 Q1420 491 1440 493 L1462 504 L1488 489 Q1540 496 1566 520 L1592 558 Z" fill="url(#shirt)"/>
<path d="M1440 493 L1462 504 L1488 489 L1494 530 L1462 545 L1432 530 Z" fill="#e6e2ef"/>
<path d="M1437 498 Q1440 530 1455 558 M1494 492 Q1498 530 1482 558" stroke="#6a5040" stroke-width="1.4" fill="none"/>
<path d="M1552 515 H1585 Q1590 515 1590 520 V531 H1552 Z" fill="#4a4a4a"/>
<rect x="1488" y="523" width="30" height="5" fill="#7ad0e8" opacity="0.7"/>
</g>
<!-- watermark bar -->
<path d="M1278 531.5 V521 Q1278 515.5 1284 515.5 H1372 L1362 531.5 Z" fill="#3e3e3e"/>
<text x="1314" y="534" font-family="Liberation Sans" font-weight="bold" font-size="17" fill="#9a9a9a">MAR</text>
<path d="M1292 527 Q1296 521 1303 522 M1300 527 L1310 518" stroke="#e02020" stroke-width="2.5" fill="none"/>
<!-- name bar -->
<path d="M1278 555 V537 Q1278 531.3 1284 531.3 H1592 V555 Z" fill="#262626" fill-opacity="0.84"/>
<g fill="#fff"><rect x="1284.1" y="545.7" width="2.8" height="4"/><rect x="1289" y="542" width="2.8" height="7.7"/><rect x="1293.8" y="538.8" width="3" height="10.9"/><rect x="1299" y="535.3" width="3" height="14.4"/></g>
<rect x="1278" y="555" width="314" height="3" fill="#e8ecee"/><rect x="1278" y="554" width="30" height="4" fill="#3aa090" opacity="0.7"/>
</svg>
<div class="t" id="vname" style="left:29.5px;top:155.5px;font-size:15px;color:#f4f4f4;letter-spacing:-0.39px;">MARYANA_Poltekes Kemenkes Yogyakarta</div>
</div>
<div class="a" style="left:1590.5px;top:381px;width:2px;height:177px;background:#2e9a3a;"></div>

<svg class="a" style="left:0;top:939px" width="1600" height="60" viewBox="0 939 1600 60">
<defs>
<linearGradient id="gw" gradientUnits="userSpaceOnUse" x1="237" y1="956" x2="266" y2="984"><stop offset="0" stop-color="#52c6f5"/><stop offset="1" stop-color="#0f6fd0"/></linearGradient>
<linearGradient id="gcop" x1="0" y1="0" x2="1" y2="1"><stop offset="0" stop-color="#2fb4e8"/><stop offset="0.45" stop-color="#5bc46a"/><stop offset="0.55" stop-color="#f3a43a"/><stop offset="1" stop-color="#c85fd8"/></linearGradient>
<linearGradient id="gedge" x1="0" y1="0" x2="1" y2="1"><stop offset="0" stop-color="#36b7e8"/><stop offset="0.5" stop-color="#2f8fd8"/><stop offset="1" stop-color="#55d07a"/></linearGradient>
<radialGradient id="gff" cx="0.6" cy="0.35" r="0.7"><stop offset="0" stop-color="#ffd34a"/><stop offset="0.5" stop-color="#ff7a2b"/><stop offset="1" stop-color="#e8234e"/></radialGradient>
<linearGradient id="gzoom" x1="0" y1="0" x2="0" y2="1"><stop offset="0" stop-color="#2d6cf5"/><stop offset="1" stop-color="#0a3fd0"/></linearGradient>
<radialGradient id="gheat" cx="0.45" cy="0.35" r="0.6"><stop offset="0" stop-color="#d00"/><stop offset="0.3" stop-color="#ff0"/><stop offset="0.7" stop-color="#1de0e0"/><stop offset="1" stop-color="#1a6fe0"/></radialGradient>
</defs>
<!-- weather -->
<linearGradient id="gcl2" x1="0" y1="0" x2="0" y2="1"><stop offset="0" stop-color="#e6eefa"/><stop offset="1" stop-color="#c3d6f2"/></linearGradient>
<path d="M29.5 977.6 Q25.2 977.6 25.2 972.3 Q25.2 967 31 966.8 Q32.5 959.2 40.5 959.2 Q48.5 959.2 50.2 966 Q54.8 967 54.8 972.3 Q54.8 977.6 50 977.6 Z" fill="url(#gcl2)" stroke="#a6c2ee" stroke-width="0.9"/>
<path d="M41 972.5 Q48.5 976.5 48.9 980.2 Q48.8 984 44.6 983.9 Q41 983.5 41 979 Z" fill="#1f78e6"/>
<circle cx="48.8" cy="958.8" r="9.5" fill="#c4281f"/>
<text x="48.8" y="963.4" font-family="Liberation Sans" font-size="12.5" fill="#fff" text-anchor="middle">3</text>
<!-- windows -->
<g fill="url(#gw)"><rect x="237" y="956" width="13.8" height="13.3" rx="1.5"/><rect x="252.3" y="956" width="13.8" height="13.3" rx="1.5"/><rect x="237" y="970.8" width="13.8" height="13.3" rx="1.5"/><rect x="252.3" y="970.8" width="13.8" height="13.3" rx="1.5"/></g>
<!-- search -->
<circle cx="305.2" cy="967" r="9.6" fill="none" stroke="#1c1c1c" stroke-width="2.4"/>
<path d="M312.5 974.5 L319.5 981.8" stroke="#1c1c1c" stroke-width="2.6" stroke-linecap="round"/>
<!-- task view -->
<rect x="348" y="963" width="22" height="20" rx="1.5" fill="#1f1f1f"/>
<rect x="355" y="956" width="22.3" height="19.5" rx="1.5" fill="#f4f4f4" fill-opacity="0.85"/>
<rect x="355" y="963" width="15" height="12.5" fill="#bdbdbd"/>
<!-- copilot -->
<linearGradient id="gcl" x1="0" y1="0" x2="0" y2="1"><stop offset="0" stop-color="#1fa0d8"/><stop offset="0.5" stop-color="#4cc26a"/><stop offset="1" stop-color="#f5b83a"/></linearGradient>
<linearGradient id="gcr" x1="0" y1="0" x2="0" y2="1"><stop offset="0" stop-color="#6a6ef0"/><stop offset="0.5" stop-color="#b55ee0"/><stop offset="1" stop-color="#f07aa8"/></linearGradient>
<linearGradient id="gcm" x1="0" y1="0" x2="0" y2="1"><stop offset="0" stop-color="#1c7de0"/><stop offset="0.45" stop-color="#3bb0e8"/><stop offset="0.6" stop-color="#f0a040"/><stop offset="1" stop-color="#f05a3a"/></linearGradient>
<rect x="403" y="963" width="13" height="16" rx="5" fill="url(#gcl)"/>
<rect x="420" y="961" width="13" height="17" rx="5" fill="url(#gcr)"/>
<path d="M414 956 H425 Q429 956 427.5 960 L419.5 980 Q418 983 414 983 H409 Q405 983 406.5 979 L414.5 960 Q415.5 956 414 956 Z" fill="url(#gcm)"/>
<!-- explorer -->
<path d="M457.8 958 Q457.8 956.2 459.5 956.2 H467 L470 958.5 H486 Q487.7 958.5 487.7 960.2 V981.3 Q487.7 983 486 983 H459.5 Q457.8 983 457.8 981.3 Z" fill="#f6c544"/>
<path d="M457.8 961 H487.7 V981.3 Q487.7 983 486 983 H459.5 Q457.8 983 457.8 981.3 Z" fill="#fbd35c"/>
<rect x="463" y="974.5" width="19.5" height="8.5" rx="1.5" fill="#1e7fd6"/>
<rect x="467" y="977" width="11" height="1.6" fill="#0d4ea0"/>
<!-- firefox -->
<radialGradient id="gff2" cx="0.72" cy="0.18" r="0.95"><stop offset="0" stop-color="#ffec4a"/><stop offset="0.35" stop-color="#ffb22c"/><stop offset="0.65" stop-color="#ff5a3a"/><stop offset="1" stop-color="#e8185a"/></radialGradient>
<path d="M531.5 955.7 Q541 962 541 971 Q541 982.7 527.7 982.7 Q514.7 982.7 514.7 970 Q514.7 963 518.5 960 L519.5 963 L521.5 960.5 L523 963.5 Q525 962 528 962 Q531 959 531.5 955.7 Z" fill="url(#gff2)"/>
<circle cx="527.5" cy="969.6" r="5.8" fill="#8440e0"/>
<path d="M518.5 966.5 Q522 963 526.5 963.5 Q530 964.5 532.5 966.5 Q528 966 525 968 Q522.5 970.5 520.5 971 Z" fill="#ffa52a"/>
<rect x="524" y="990.3" width="7.3" height="2.2" rx="1.1" fill="#6d7478"/>
<!-- edge -->
<linearGradient id="ged" gradientUnits="userSpaceOnUse" x1="570" y1="958" x2="597" y2="975"><stop offset="0" stop-color="#2d9ee0"/><stop offset="0.55" stop-color="#35b7d8"/><stop offset="1" stop-color="#62d57c"/></linearGradient>
<path d="M568 971 Q568 955 583 954.6 Q597 954.6 598 969 Q598 976 591 977 Q584 977 584 972 Q584 968 588 967.5 Q583 963 577 966 Q570 970 571 977 Q569 975 568 971 Z" fill="url(#ged)"/>
<path d="M568 971 Q569 985 584 984.8 Q593 984.8 597 978 Q590 981 583 979.5 Q574 976 576 968 Q578 963 584 963 Q576 962 571 966 Q568 968 568 971 Z" fill="#1f64b8"/>
<path d="M576 968 Q578 963 584 963 Q590 963 592 968 Q589 966 585 967 Q580 968 581 974 Q582 979 590 981 Q580 982 577 976 Q575 972 576 968 Z" fill="#3a9de0"/>
<rect x="579" y="990.3" width="7.3" height="2.2" rx="1.1" fill="#6d7478"/>
<!-- store -->
<path d="M623 961 H652.3 V981 Q652.3 984.2 649 984.2 H626.3 Q623 984.2 623 981 Z" fill="#1f4f8f"/>
<path d="M629 961 V957.5 Q629 955.4 631 955.4 H644 Q646 955.4 646 957.5 V961" fill="none" stroke="#5ec8f0" stroke-width="1.6"/>
<rect x="631.5" y="965.5" width="5.5" height="5.5" fill="#f25022"/><rect x="638" y="965.5" width="5.5" height="5.5" fill="#7fba00"/><rect x="631.5" y="972" width="5.5" height="5.5" fill="#00a4ef"/><rect x="638" y="972" width="5.5" height="5.5" fill="#ffb900"/>
<circle cx="649" cy="958.2" r="9.7" fill="#1572d3"/>
<text x="649" y="962.8" font-family="Liberation Sans" font-size="12.5" fill="#fff" text-anchor="middle">1</text>
<rect x="634.4" y="990.3" width="7.3" height="2.2" rx="1.1" fill="#6d7478"/>
<!-- mcafee -->
<path d="M679 955.4 L692.8 963 L706.7 954.6 V979.5 L692.8 984.7 L679 979.5 Z" fill="#c8282a"/>
<path d="M683.6 963.3 L692.8 968.8 L702.1 962.8 V976.5 L692.8 979.8 L683.6 976.5 Z" fill="#dde5ea"/>
<!-- chrome -->
<circle cx="747.5" cy="969.6" r="15" fill="#1e9e49"/>
<path d="M747.5 969.6 L734.5 962.1 A15 15 0 0 1 760.5 962.1 Z" fill="#e23a2e"/>
<path d="M747.5 954.6 A15 15 0 0 1 760.5 962.1 L747.5 969.6 Z" fill="#e23a2e"/>
<path d="M760.5 962.1 A15 15 0 0 1 747.5 984.6 L747.5 969.6 Z" fill="#f9c12e"/>
<path d="M734.5 962.1 L747.5 962.1 L741 969.6 Z" fill="#e23a2e"/>
<circle cx="747.5" cy="969.6" r="7" fill="#fff"/>
<circle cx="747.5" cy="969.6" r="5.4" fill="#3b7be8"/>
<!-- slash icon -->
<g stroke="#1024c8" stroke-width="2.6" stroke-linecap="round"><path d="M803 956 L793 983"/><path d="M811.5 956 L801.5 983"/><path d="M792 976 H801"/></g>
<!-- heatmap -->
<path d="M851 983 Q845 982 846 975 Q848 968 850 964 Q852 956 856 955.5 Q860 956 861 963 Q862 968 864 969 Q871 974 870 978 Q869 981 864 979 Q860 976 858 970 Q856 972 856 977 Q856 983 851 983 Z" fill="url(#gheat)" stroke="#1a60d0" stroke-width="0.8"/>
<ellipse cx="856" cy="963" rx="2" ry="3" fill="#c00"/>
<!-- R logo -->
<ellipse cx="912" cy="968" rx="14.5" ry="8.8" fill="none" stroke="#a9abae" stroke-width="3.2"/>
<path d="M906 962 H917 Q923 962 923 967.5 Q923 971.5 918.5 972.5 L924 980.6 H918.5 L913.5 973 H911 V980.6 H906 Z M911 965.5 V969.5 H916.5 Q918.3 969.5 918.3 967.5 Q918.3 965.5 916.5 965.5 Z" fill="#2366b8" fill-rule="evenodd"/>
<!-- diamond -->
<path d="M960 962.7 H976.5 L980 968 L968.2 979.8 L956.5 968 Z" fill="#22b5ee"/>
<path d="M956.5 968 H980 L968.2 979.8 Z" fill="#1a8fe0"/>
<!-- R circle -->
<circle cx="1022.7" cy="969.4" r="15" fill="#75a4d3"/>
<text x="1022.7" y="976.5" font-family="Liberation Serif" font-size="20" fill="#fff" text-anchor="middle">R</text>
<!-- grid -->
<rect x="1064.6" y="956.2" width="26" height="26.4" fill="#5f7f99"/>
<g fill="#fff"><rect x="1075" y="958" width="5" height="5"/><rect x="1083" y="958" width="5" height="5"/><rect x="1067" y="966" width="5" height="5"/><rect x="1075" y="966" width="5" height="5"/><rect x="1083" y="966" width="5" height="5"/><rect x="1067" y="974" width="5" height="5"/><rect x="1075" y="974" width="5" height="5"/></g>
<rect x="1082.4" y="974" width="9.3" height="9" fill="#d21c1c"/>
<text x="1087" y="981.8" font-family="Liberation Sans" font-weight="bold" font-size="8" fill="#fff" text-anchor="middle">15</text>
<!-- zoom -->
<rect x="1109.2" y="946.2" width="47.2" height="47.4" rx="4" fill="#eef2f6" stroke="#e2e8ee" stroke-width="0.8"/>
<rect x="1118.2" y="954.6" width="29.8" height="29.6" rx="12" fill="url(#gzoom)"/>
<text x="1133.1" y="972.5" font-family="Liberation Sans" font-size="8.5" font-weight="bold" fill="#fff" text-anchor="middle" letter-spacing="-0.2">zoom</text>
<rect x="1123" y="990" width="19.6" height="2.6" rx="1.3" fill="#1a73d6"/>
<!-- tray -->
<path d="M1246 972.5 L1252.5 966 L1259 972.5" fill="none" stroke="#1c1c1c" stroke-width="1.5"/>
<path d="M1286 978 Q1281 978 1281.5 972 Q1282 966 1288 966.5 Q1290 962 1295 962.5 Q1301 963.5 1301 969 L1297 976 Z" fill="#aaaaaa" stroke="#3a3a3a" stroke-width="1"/>
<circle cx="1296.3" cy="974.3" r="5.3" fill="#d21f2f"/>
<path d="M1294.3 972.3 L1298.3 976.3 M1298.3 972.3 L1294.3 976.3" stroke="#fff" stroke-width="1.3"/>
<path d="M1323.5 971 Q1323 962 1332 961.5 Q1337 961.5 1340 965" fill="none" stroke="#1c1c1c" stroke-width="1.5"/>
<path d="M1340.5 960.5 V965.5 H1335.5" fill="none" stroke="#1c1c1c" stroke-width="1.5"/>
<path d="M1330 977.5 Q1327 977 1325.5 975" fill="none" stroke="#1c1c1c" stroke-width="1.5"/>
<path d="M1323.5 978.8 V974 H1328.5" fill="none" stroke="#1c1c1c" stroke-width="1.5"/>
<circle cx="1337.8" cy="974.3" r="5" fill="#f59c14"/>
<rect x="1362" y="960" width="5" height="10" rx="2.5" fill="none" stroke="#1f5fc0" stroke-width="1.5"/>
<path d="M1360 968 Q1360 974 1364.5 974 Q1369 974 1369 968 M1364.5 974 V977" fill="none" stroke="#1f5fc0" stroke-width="1.5"/>
<path d="M1385 964.5 L1372 971 L1378 972.5 L1380 978.5 Z" fill="none" stroke="#1f5fc0" stroke-width="1.5" stroke-linejoin="round"/>
<path d="M1403.5 967 Q1412.5 959 1421.5 967 M1406.5 970 Q1412.5 965 1418.5 970 M1409.3 973 Q1412.5 970.5 1415.7 973" fill="none" stroke="#1c1c1c" stroke-width="1.5"/>
<circle cx="1412.5" cy="975.7" r="1.3" fill="#1c1c1c"/>
<path d="M1433 967 H1436.5 L1441 963.8 V976.8 L1436.5 973.6 H1433 Z" fill="none" stroke="#1c1c1c" stroke-width="1.3" stroke-linejoin="round"/>
<path d="M1444 967 Q1446 970.3 1444 973.6 M1447 964.8 Q1450.5 970.3 1447 975.8" fill="none" stroke="#1c1c1c" stroke-width="1.3"/>
<path d="M1450.5 963.5 Q1455 970.3 1450.5 977" fill="none" stroke="#b0b4b8" stroke-width="1.2"/>
<rect x="1462.5" y="964.3" width="22" height="11" rx="2.5" fill="none" stroke="#1c1c1c" stroke-width="1.4"/>
<rect x="1485.5" y="967.5" width="1.8" height="4.6" rx="0.8" fill="#1c1c1c"/>
<rect x="1465" y="966.8" width="11.5" height="6" fill="#1c1c1c"/>
</svg>

<div class="t" style="left:1164px;top:951px;font-size:15.5px;color:#1a1a1a;text-align:right;width:412px;letter-spacing:-0.6px;">1:33 PM</div>
<div class="t" style="left:1164px;top:971px;font-size:15.5px;color:#1a1a1a;text-align:right;width:412px;">2/26/2026</div>
</body></html>
